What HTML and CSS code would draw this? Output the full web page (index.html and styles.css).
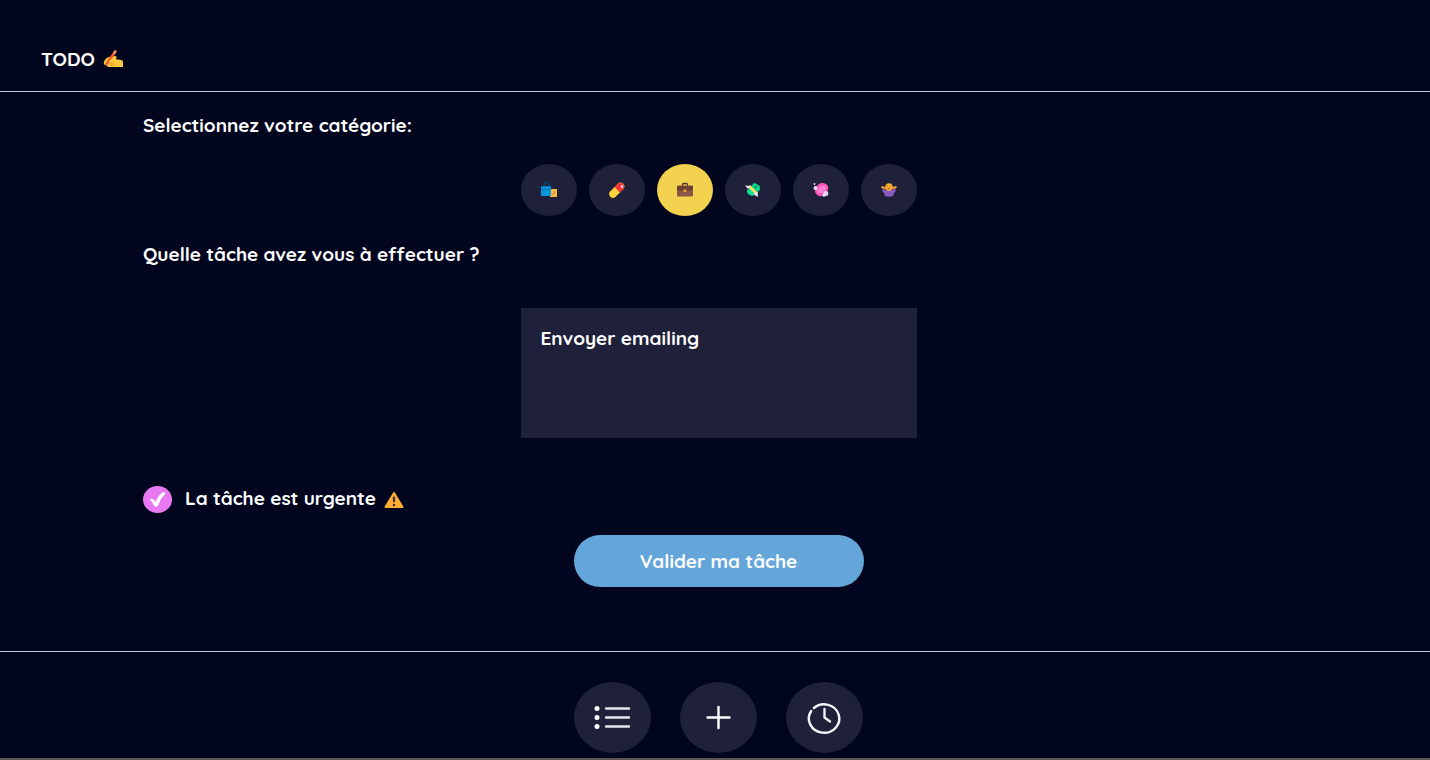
FILE: index.html
```html
<!DOCTYPE html>
<html lang="fr">
<head>
<meta charset="utf-8">
<meta name="viewport" content="width=device-width, initial-scale=1">
<title>TODO</title>
<link rel="stylesheet" href="styles.css">
</head>
<body>
<header class="header">
  <h1 class="title">TODO</h1>
  <svg class="emoji" viewBox="0 0 20 20" aria-hidden="true">
    <path fill="#ffc83d" d="M1 13q1-4 5-5l5-1 2 1-1 2 6 1q2 0 2 2v5H6q-2 0-3-2-3 0-2-3Z"/>
    <path d="m6 15 5-1M7 17l4-1" stroke="#e49a28" fill="none"/>
    <path d="M4 14.500 12 3" stroke="#f4592d" stroke-width="2.800" stroke-linecap="round"/>
    <path d="M11.500 3.500 12.300 2.500" stroke="#e9846c" stroke-width="2.800" stroke-linecap="round"/>
    <path fill="#ffc83d" d="m6 12 6-5 2 1-2 3-5 4Z"/>
  </svg>
</header>
<main class="main">
  <form class="form">
    <h2 class="label">Selectionnez votre catégorie:</h2>
    <div class="categories">
      <button type="button" class="category" aria-label="Courses">
        <svg class="icon" viewBox="0 0 16 16"><path d="M3 4V2.500q0-2 2.500-2T8 2.500V4" fill="none" stroke="#064f79" stroke-width="1.200"/><path fill="#fdb844" d="M9 7h7v8H9z"/><path d="M11 12q3 0 3-3" fill="none" stroke="#d8822a"/><path fill="#0795de" d="M0 4h10v10H0z"/><path fill="#0876b9" d="M0 4h10v1H0zm0 3h10v1H0z"/></svg>
      </button>
      <button type="button" class="category" aria-label="Santé">
        <svg class="icon" viewBox="0 0 16 16"><path d="m4 12 7.500-7.500" stroke="#ffd33c" stroke-width="7.500" stroke-linecap="round"/><path d="m5.600 5.100 3.200-3.200a3.750 3.750 0 0 1 5.300 5.300l-3.200 3.200Z" fill="#f22f35"/><circle cx="13" cy="4.500" r="1.200" fill="#fff"/></svg>
      </button>
      <button type="button" class="category selected" aria-label="Travail" aria-pressed="true">
        <svg class="icon" viewBox="0 0 16 16"><path d="M5.500 4V3q0-1.500 1-1.500h3q1 0 1 1.500v1" fill="none" stroke="#58362c" stroke-width="1.300"/><rect y="3.500" width="16" height="11" rx="1" fill="#8b5745"/><path fill="#6e4033" d="M0 4h16v4l-6 1H6L0 8z"/><rect x="6.500" y="7.500" width="3" height="2.500" fill="#f29a3b"/></svg>
      </button>
      <button type="button" class="category" aria-label="Finances">
        <svg class="icon" viewBox="0 0 16 16"><path fill="#10b875" d="m2 8 7-7 6 3v4l-7 6-5-2Z"/><path fill="#05e493" d="m2 9 3-2 4 4-2 3-4-2Zm6-6 2-2 4 3v4l-3 1-3-3Z"/><path fill="#07985f" d="m9 4 3 0 0 2-2 1Z"/><path fill="#ffe26c" d="m3 5 2-2 8 8-2 2Z"/><path fill="#eeeafa" d="m0 3.500 5 .5-2 3Zm8 8.500 4.500-2 .5 5Z"/></svg>
      </button>
      <button type="button" class="category" aria-label="Ménage">
        <svg class="icon" viewBox="0 0 16 16"><path d="m2 6 4-4q3-2 7 0 3 2 2 5l-1 4q-4 4-8 3-4-2-4-5Z" fill="#ff58bd"/><path d="m4 8 4-4 4 0 1 3-4 4-4 0Z" fill="#ff82d0"/><circle cx="2.500" cy="6" r="2" fill="#eadcf8"/><circle cx="12.800" cy="11.500" r="2.500" fill="#e3daf8"/><circle cx="11" cy="13.200" r="1.500" fill="#e3daf8"/><circle cx="1.500" cy="2" r="1" fill="#eadcf8"/></svg>
      </button>
      <button type="button" class="category" aria-label="Autre">
        <svg class="icon" viewBox="0 0 16 16"><path fill="#8a5cc1" d="M1.500 6.500 5 8h6l3.500-1.500v3L13 11l-1 3q-4 1.500-8 0l-1-3-1.500-1.500Z"/><path d="M1.200 5.200 4 6m10.800-.8L12 6" stroke="#f8a832" stroke-width="2" stroke-linecap="round"/><circle cx="8" cy="5" r="3.700" fill="#ffad32"/><path fill="none" stroke="#9c5b20" stroke-width=".8" d="M6 4h1m2 0h1M7 6.500h2"/></svg>
      </button>
    </div>
    <label class="label" for="task">Quelle tâche avez vous à effectuer ?</label>
    <textarea class="task" id="task">Envoyer emailing</textarea>
    <label class="urgent">
      <input class="urgent-input" type="checkbox" checked>
      <svg class="check" viewBox="0 0 29 27" aria-hidden="true"><ellipse cx="14.500" cy="13.500" rx="14.500" ry="13.500" fill="#e879f2"/><path d="M7 14q1.500-2 3.500-.5L12.500 16q3-7 7-9.500 2-.8 3 .7-5 5-7.500 12.300-2 2.300-4 .3-1-4-4-5.800Z" fill="#fff"/></svg>
      <span>La tâche est urgente</span>
      <svg class="emoji warning" viewBox="0 0 20 20" aria-hidden="true"><path d="M10 3 18.500 17h-17Z" fill="#ffad32" stroke="#ffad32" stroke-width="2" stroke-linejoin="round"/><path d="M9.200 7h1.600l-.4 5H9.600Z" fill="#35302d" stroke="#35302d"/><circle cx="10" cy="15" r="1.300" fill="#35302d"/></svg>
    </label>
    <button type="submit" class="submit">Valider ma tâche</button>
  </form>
</main>
<footer class="footer">
  <nav class="nav">
    <button type="button" class="nav-button" aria-label="Liste"><svg class="nav-icon" viewBox="0 0 40 40"><g fill="#fff"><circle cx="5" cy="10.500" r="2.500"/><circle cx="5" cy="19.500" r="2.500"/><circle cx="5" cy="28.500" r="2.500"/></g><path d="M14 10.500h23M14 19.500h23M14 28.500h23" stroke="#e6e6ec" stroke-width="2.400" stroke-linecap="round"/></svg></button>
    <button type="button" class="nav-button" aria-label="Ajouter"><svg class="nav-icon" viewBox="0 0 40 40"><path d="M9.500 19.500h22M20.500 9v21" stroke="#fff" stroke-width="2.400" stroke-linecap="round"/></svg></button>
    <button type="button" class="nav-button" aria-label="Historique"><svg class="nav-icon" viewBox="0 0 40 40" fill="none" stroke="#f4f4f8" stroke-width="2.400" stroke-linecap="round" stroke-linejoin="round"><path d="M9.900 10A15.200 14.200 0 1 1 7.200 13M20.500 11v8.500l5.500 4"/></svg></button>
  </nav>
</footer>
</body>
</html>
```
FILE: styles.css
```css
* {
  box-sizing: border-box;
}

body {
  margin: 0;
  min-height: 100vh;
  display: flex;
  flex-direction: column;
  background: #02051e;
  border-bottom: 2px solid #5c5558;
  color: #fff;
  font: 700 19px/24px Quicksand, Lato, sans-serif;
}

button,
textarea {
  border: 0;
  color: inherit;
  font: inherit;
}

button {
  display: grid;
  place-items: center;
  padding: 0;
  cursor: pointer;
}

.header {
  display: flex;
  align-items: center;
  gap: 8px;
  padding: 47px 41px 20px;
  border-bottom: 1px solid #c9cad2;
}

.title,
.label {
  margin: 0;
  font-size: 19px;
  font-weight: 700;
}

.emoji {
  width: 20px;
  height: 20px;
}

.main {
  flex: 1;
  padding: 21px 136px 64px 143px;
}

.form {
  display: flex;
  flex-direction: column;
  align-items: flex-start;
}

.categories {
  align-self: center;
  display: flex;
  gap: 12px;
  margin: 27px 0 26px;
}

.category {
  width: 56px;
  height: 52px;
  border-radius: 50%;
  background: #1f2039;
}

.selected {
  background: #f3d250;
}

.icon {
  width: 16px;
  height: 16px;
}

.task {
  align-self: center;
  width: 396px;
  max-width: 100%;
  height: 130px;
  margin: 42px 0 48px;
  padding: 18px 20px;
  background: #1f2039;
  resize: none;
}

.urgent {
  display: flex;
  align-items: flex-start;
  gap: 8px;
}

.urgent-input {
  appearance: none;
  position: absolute;
  width: 29px;
  height: 27px;
  margin: 0;
  cursor: pointer;
}

.check {
  width: 29px;
  height: 27px;
  margin-right: 5px;
}

.warning {
  align-self: center;
}

.submit {
  align-self: center;
  width: 290px;
  max-width: 100%;
  height: 52px;
  margin-top: 22px;
  border-radius: 26px;
  background: #64a6d9;
}

.footer {
  padding: 30px 0 5px 6px;
  border-top: 1px solid #c9cad2;
}

.nav {
  display: flex;
  justify-content: center;
  gap: 29px;
}

.nav-button {
  width: 77px;
  height: 71px;
  border-radius: 50%;
  background: #1f2039;
}

.nav-icon {
  width: 40px;
  height: 40px;
}
```
